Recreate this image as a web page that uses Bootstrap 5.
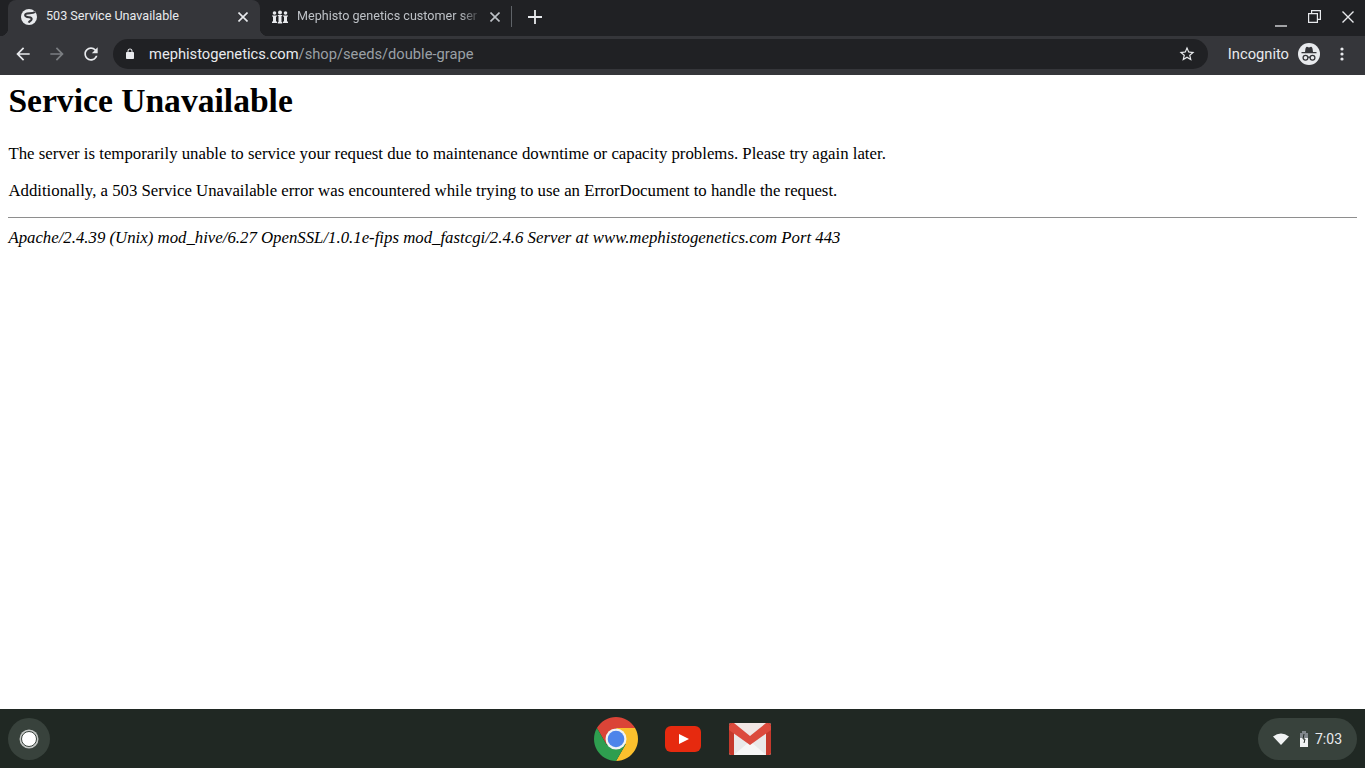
<!DOCTYPE html>
<html lang="en">
<head>
    <meta charset="UTF-8">
    <meta name="viewport" content="width=device-width, initial-scale=1.0">
    <title>503 Service Unavailable</title>
    <link href="https://cdn.jsdelivr.net/npm/bootstrap@5.3.0/dist/css/bootstrap.min.css" rel="stylesheet">
    <style>
        html, body { height: 100%; overflow: hidden; }
        body { font-family: "Liberation Serif", serif; color: #000; background: #fff; }
        .screen-wrap { height: 768px; }

        /* tab strip */
        .tab-strip { height: 36px; background: #202124; font-family: Roboto, sans-serif; font-size: 12.6px; flex: none; }
        .tab-item { width: 251px; height: 36px; padding: 0 11px 3px 12px; position: relative; color: #bdc1c6; }
        .tab-item.active-tab { background: #35363a; color: #e8eaed; border-radius: 8px 8px 0 0; }
        .tab-item.active-tab::before, .tab-item.active-tab::after { content: ""; position: absolute; bottom: 0; width: 8px; height: 8px; }
        .tab-item.active-tab::before { left: -8px; background: radial-gradient(circle at 0 0, transparent 8px, #35363a 8.5px); }
        .tab-item.active-tab::after { right: -8px; background: radial-gradient(circle at 100% 0, transparent 8px, #35363a 8.5px); }
        .tab-first { width: 252px; margin-left: 8px; padding-left: 13px; padding-right: 12px; }
        .tab-title { flex: 1; margin-left: 9px; white-space: nowrap; overflow: hidden; }
        .tab-fade { -webkit-mask-image: linear-gradient(to right, #000 88%, transparent 100%); mask-image: linear-gradient(to right, #000 88%, transparent 100%); }
        .tab-sep { width: 1px; height: 21px; margin-bottom: 3px; background: #5f6368; }
        .new-tab { width: 45px; padding-bottom: 3px; }
        .win-btn { width: 33.5px; height: 33px; margin-bottom: 3px; }

        /* toolbar */
        .tool-bar { height: 39px; padding: 0 6px 3px; background: #35363a; flex: none; font-family: Roboto, sans-serif; color: #e8eaed; }
        .tool-btn { width: 34px; height: 34px; }
        .omni-box { height: 30px; border-radius: 15px; background: #202124; margin-left: 5px; padding: 0 12px 0 11px; font-size: 14.7px; }
        .url-text { margin-left: 13px; }
        .url-host { color: #e8eaed; }
        .url-path { color: #9aa0a6; }
        .incog-label { font-size: 14.7px; margin: 0 9px 0 20px; }
        .menu-btn { margin-left: 5px; }

        /* apache page */
        .page-body { padding: 8.4px; background: #fff; overflow: hidden; }
        .page-body h1 { font-size: 33.6px; font-weight: 700; line-height: 36px; margin: 0 0 24px; font-family: "Liberation Serif", serif; }
        .page-body p { font-size: 16.8px; line-height: 21px; margin: 0 0 16px; }
        .page-body hr { margin: 0 0 9px; border: 0; border-top: 1px solid #8e8e8e; opacity: 1; }
        .page-body address { font-size: 16.8px; font-style: italic; line-height: 21px; margin: 0; }

        /* shelf */
        .shelf-bar { height: 59px; background: #202823; flex: none; padding: 0 8px; font-family: Roboto, sans-serif; }
        .launcher-btn { width: 42px; height: 42px; border-radius: 50%; background: #38423c; }
        .launcher-dot { width: 16px; height: 16px; border-radius: 50%; background: #fff; border: 1px solid #38423c; box-shadow: 0 0 0 1.5px #c4c7c5; }
        .shelf-apps { margin-left: 544px; width: 700px; }
        .app-chrome { position: relative; }
        .run-mark { position: absolute; left: 16px; bottom: -9px; width: 12px; height: 2px; background: #e8eaed; }
        .app-youtube { margin-left: 27px; }
        .app-gmail { margin-left: 27px; }
        .status-pill { width: 99px; height: 42px; border-radius: 21px; background: #38423c; color: #e8eaed; font-size: 14px; margin-left: auto; padding-left: 15px; }
        .status-batt { margin-left: 10px; }
        .status-time { margin-left: 6px; margin-top: 1px; }
    </style>
</head>
<body>
    <div class="screen-wrap d-flex flex-column">
        <!-- tabs -->
        <div class="tab-strip d-flex align-items-center">
            <div class="tab-item active-tab tab-first d-flex align-items-center">
                <svg width="16" height="16" viewBox="0 0 24 24"><circle cx="12" cy="12" r="12" fill="#e8eaed"/><path d="M21 4.500C17 8 10 5 7 7.500 4.500 10 8 12.500 12 12.500c3.500 0 5 2 3.500 4-1.500 1.500-3 1.500-4 4" fill="none" stroke="#35363a" stroke-width="3"/></svg>
                <span class="tab-title">503 Service Unavailable</span>
                <svg width="10" height="10" viewBox="0 0 10 10" stroke="#e8eaed" stroke-width="1.6"><path d="M.5.5l9 9M9.500.5l-9 9"/></svg>
            </div>
            <div class="tab-item d-flex align-items-center">
                <svg width="16" height="14" viewBox="0 0 16 14" fill="#e8eaed"><circle cx="2.500" cy="3" r="1.800"/><circle cx="8" cy="2.500" r="2"/><circle cx="13.500" cy="3" r="1.800"/><path d="M0 5.500h5v1H4v5h1v1.500H0v-1.500h1v-5H0zM5.800 5h4.400v1H9.500v6h.7v1.500H5.800V12h.7V6h-.7zM11 5.500h5v1h-1v5h1v1.500h-5v-1.500h1v-5h-1z"/></svg>
                <span class="tab-title tab-fade">Mephisto genetics customer ser</span>
                <svg class="ms-2" width="10" height="10" viewBox="0 0 10 10" stroke="#bdc1c6" stroke-width="1.6"><path d="M.5.5l9 9M9.500.5l-9 9"/></svg>
            </div>
            <div class="tab-sep"></div>
            <div class="new-tab d-flex justify-content-center">
                <svg width="14" height="14" viewBox="0 0 14 14" stroke="#e8eaed" stroke-width="1.800"><path d="M7 0v14M0 7h14"/></svg>
            </div>
            <div class="ms-auto d-flex">
                <div class="win-btn d-flex justify-content-center align-items-center">
                    <svg width="12" height="12" viewBox="0 0 12 12" class="mt-2" stroke="#e8eaed" stroke-width="1.300"><path d="M0 11h12"/></svg>
                </div>
                <div class="win-btn d-flex justify-content-center align-items-center">
                    <svg width="13" height="13" viewBox="0 0 13 13" fill="none" stroke="#e8eaed" stroke-width="1.200"><path d="M3.600 3.600V.6h8.800v8.800H9.400"/><path d="M.6 3.600h8.800v8.800H.6z"/></svg>
                </div>
                <div class="win-btn d-flex justify-content-center align-items-center">
                    <svg width="12" height="12" viewBox="0 0 12 12" stroke="#e8eaed" stroke-width="1.400"><path d="M.5.5l11 11M11.500.5l-11 11"/></svg>
                </div>
            </div>
        </div>

        <!-- toolbar -->
        <div class="tool-bar d-flex align-items-center">
            <div class="tool-btn d-flex justify-content-center align-items-center flex-shrink-0">
                <svg width="20" height="20" viewBox="0 0 24 24" fill="#e8eaed"><path d="M20 11H7.830l5.590-5.590L12 4l-8 8 8 8 1.410-1.410L7.830 13H20v-2z"/></svg>
            </div>
            <div class="tool-btn d-flex justify-content-center align-items-center flex-shrink-0">
                <svg width="20" height="20" viewBox="0 0 24 24" fill="#7b7e82"><path d="M12 4l-1.410 1.410L16.170 11H4v2h12.170l-5.580 5.590L12 20l8-8z"/></svg>
            </div>
            <div class="tool-btn d-flex justify-content-center align-items-center flex-shrink-0">
                <svg width="20" height="20" viewBox="0 0 24 24" fill="#e8eaed"><path d="M17.650 6.350C16.200 4.900 14.210 4 12 4c-4.420 0-7.990 3.580-7.990 8s3.570 8 7.990 8c3.730 0 6.840-2.550 7.730-6h-2.080c-.82 2.330-3.040 4-5.650 4-3.310 0-6-2.690-6-6s2.690-6 6-6c1.660 0 3.140.69 4.220 1.780L13 11h7V4l-2.350 2.350z"/></svg>
            </div>
            <div class="omni-box flex-grow-1 d-flex align-items-center">
                <svg width="12" height="12" viewBox="0 0 24 24" fill="#e8eaed"><path d="M18 8h-1V6c0-2.760-2.240-5-5-5S7 3.240 7 6v2H6c-1.100 0-2 .9-2 2v10c0 1.100.9 2 2 2h12c1.100 0 2-.9 2-2V10c0-1.100-.9-2-2-2zM9 6c0-1.660 1.340-3 3-3s3 1.340 3 3v2H9V6z"/></svg>
                <span class="url-text"><span class="url-host">mephistogenetics.com</span><span class="url-path">/shop/seeds/double-grape</span></span>
                <svg class="ms-auto" width="18" height="18" viewBox="0 0 24 24" fill="#e8eaed"><path d="M22 9.240l-7.190-.62L12 2 9.190 8.630 2 9.240l5.460 4.730L5.820 21 12 17.270 18.180 21l-1.630-7.030L22 9.240zM12 15.400l-3.760 2.270 1-4.280-3.320-2.880 4.380-.38L12 6.100l1.710 4.040 4.380.38-3.320 2.880 1 4.280L12 15.400z"/></svg>
            </div>
            <span class="incog-label">Incognito</span>
            <svg width="22" height="22" viewBox="0 0 22 22" class="flex-shrink-0"><circle cx="11" cy="11" r="11" fill="#e8eaed"/><path d="M7.200 7.500Q7.500 3.800 9 3.800L11 4.600 13 3.800Q14.500 3.800 14.800 7.500L15 9H18.500V10.300H3.500V9H7z" fill="#35363a"/><g fill="none" stroke="#35363a" stroke-width="1.300"><circle cx="7.500" cy="14.700" r="2.400"/><circle cx="14.500" cy="14.700" r="2.400"/><path d="M9.800 14.200h2.400"/></g></svg>
            <div class="tool-btn menu-btn d-flex justify-content-center align-items-center flex-shrink-0">
                <svg width="4" height="14" viewBox="0 0 4 14" fill="#e8eaed"><circle cx="2" cy="2" r="1.600"/><circle cx="2" cy="7" r="1.600"/><circle cx="2" cy="12" r="1.600"/></svg>
            </div>
        </div>

        <!-- page -->
        <div class="page-body flex-grow-1">
            <h1>Service Unavailable</h1>
            <p>The server is temporarily unable to service your request due to maintenance downtime or capacity problems. Please try again later.</p>
            <p>Additionally, a 503 Service Unavailable error was encountered while trying to use an ErrorDocument to handle the request.</p>
            <hr>
            <address>Apache/2.4.39 (Unix) mod_hive/6.27 OpenSSL/1.0.1e-fips mod_fastcgi/2.4.6 Server at www.mephistogenetics.com Port 443</address>
        </div>

        <!-- shelf -->
        <div class="shelf-bar d-flex align-items-center">
            <div class="launcher-btn d-flex justify-content-center align-items-center flex-shrink-0">
                <div class="launcher-dot"></div>
            </div>
            <div class="shelf-apps d-flex align-items-center">
                <div class="app-chrome d-flex">
                    <svg width="44" height="44" viewBox="-22 -22 44 44">
                        <path d="M-19.050-11A22 22 0 0 1 19.050-11L0-11-9.500 5.500z" fill="#db4437"/>
                        <path d="M19.050-11A22 22 0 0 1 0 22L9.500 5.500 0-11z" fill="#fbc02d"/>
                        <path d="M0 22A22 22 0 0 1-19.050-11L-9.500 5.500 9.500 5.500z" fill="#2e9e4f"/>
                        <circle r="10.500" fill="#f1f3f4"/>
                        <circle r="8.300" fill="#4d84ea"/>
                    </svg>
                    <span class="run-mark"></span>
                </div>
                <svg class="app-youtube" width="36" height="26" viewBox="0 0 36 26"><rect width="36" height="26" rx="6" fill="#e62a0f"/><path d="M14 8l10 5-10 5z" fill="#fff"/></svg>
                <svg class="app-gmail" width="44" height="34" viewBox="0 0 44 34">
                    <rect x="1" y="1" width="42" height="32" rx="2" fill="#e9e9e9"/>
                    <path d="M6 33L22 19l16 14z" fill="#f6f6f6"/>
                    <path d="M6 1h32L22 13z" fill="#f2e6e4"/>
                    <path d="M1 3a2 2 0 0 1 2-2h3v32H3a2 2 0 0 1-2-2zM38 1h3a2 2 0 0 1 2 2v28a2 2 0 0 1-2 2h-3z" fill="#c5392c"/>
                    <path d="M1 4l3-3h2l16 13L38 1h2l3 3v4L22 23 1 8z" fill="#dc4a3d"/>
                </svg>
            </div>
            <div class="status-pill d-flex align-items-center flex-shrink-0">
                <svg width="16" height="12" viewBox="0 0 16 12"><path d="M0 3.500Q8-2.500 16 3.500L8 12z" fill="#f1f3f4"/></svg>
                <svg class="status-batt" width="10" height="16" viewBox="0 0 10 16"><rect x="3" y="0" width="4" height="2" fill="#80868b"/><rect x="1" y="2" width="8" height="5" fill="#80868b"/><rect x="1" y="7" width="8" height="9" fill="#f1f3f4"/><path d="M5 3L4 8h2l-1 4" stroke="#202823" stroke-width="1" fill="none"/></svg>
                <span class="status-time">7:03</span>
            </div>
        </div>
    </div>
    <script src="https://cdn.jsdelivr.net/npm/bootstrap@5.3.0/dist/js/bootstrap.bundle.min.js"></script>
</body>
</html>
